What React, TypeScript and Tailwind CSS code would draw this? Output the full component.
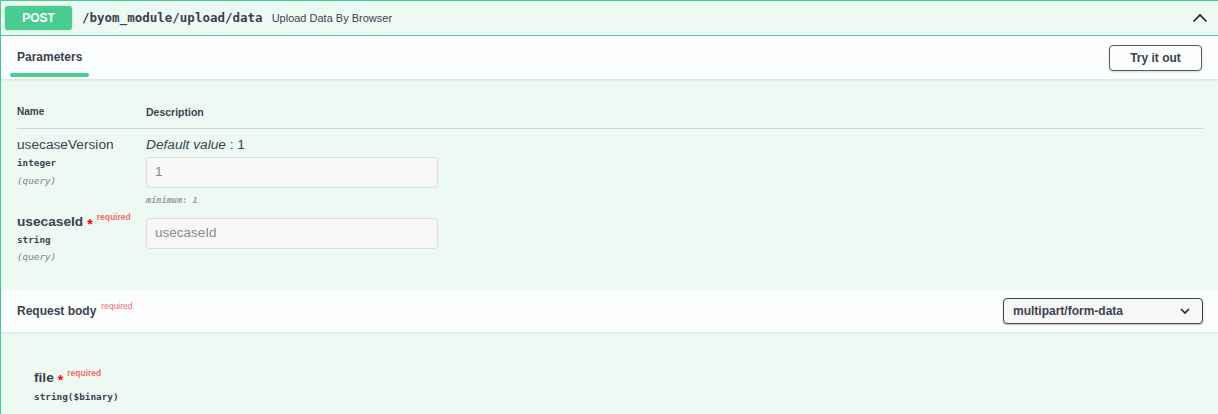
import React from "react";

const sans = "font-['Liberation_Sans',Arial,sans-serif]";
const mono = "font-['DejaVu_Sans_Mono',monospace]";

function Req() {
  return (
    <>
      <span className="ml-[4px] text-[14px] leading-none text-[red] relative top-[2px]">*</span>
      <span className="ml-[4px] text-[8.5px] leading-none text-[#f86a6a] relative -top-[5px]">required</span>
    </>
  );
}

export default function App() {
  return (
    <div className={`w-[1218px] h-[414px] overflow-hidden bg-white ${sans} text-[#3b4151]`}>
      <div className="w-[1230px] h-[414px] border-l border-t border-[#49cc90] bg-[#edfaf4]">
        {/* Summary */}
        <div className="flex items-center h-[35px] pl-[4px] border-b border-[#49cc90] w-[1217px]">
          <div className="w-[67px] h-[24px] rounded-[3px] bg-[#49cc90] text-white font-bold text-[12px] flex items-center justify-center shadow-[0_0_3px_rgba(0,0,0,0.19)]">
            POST
          </div>
          <span className={`ml-[10px] ${mono} font-bold text-[12.5px] text-[#3b4151]`}>
            /byom_module/upload/data
          </span>
          <span className="ml-[9px] text-[11px] text-[#3b4151]">Upload Data By Browser</span>
          <svg className="ml-auto mr-[10px]" width="16" height="10" viewBox="0 0 16 10">
            <polyline points="1.5,8.5 8,2 14.5,8.5" fill="none" stroke="#222" strokeWidth="1.6" />
          </svg>
        </div>

        {/* Tab header */}
        <div className="w-[1217px] h-[43px] bg-white/80 shadow-[0_1px_2px_rgba(0,0,0,0.1)] flex items-center pl-[9px] pr-[16px] relative">
          <div className="relative h-[43px] px-[7px] flex items-center">
            <span className="text-[12px] font-bold text-[#3b4151] relative -top-[1px]">Parameters</span>
            <div className="absolute left-0 right-0 top-[37px] h-[4px] rounded-[2px] bg-[#49cc90]" />
          </div>
          <button className="ml-auto w-[93px] h-[26px] rounded-[4px] border-[1.5px] border-[#55585f] bg-transparent text-[12px] font-bold text-[#3b4151] flex items-center justify-center shadow-[0_1px_2px_rgba(0,0,0,0.15)]">
            Try it out
          </button>
        </div>

        {/* Parameters table */}
        <div className="pl-[16px] w-[1202px]">
          <div className="pt-[26px] pb-[9px] flex border-b border-[#cbd5d4]">
            <div className="w-[129px] h-[14px] leading-[14px] text-[10px] font-bold">Name</div>
            <div className="h-[14px] leading-[14px] text-[10.5px] font-bold">Description</div>
          </div>

          {/* Row 1 */}
          <div className="flex pt-[8px]">
            <div className="w-[129px] flex flex-col">
              <div className="h-[16px] leading-[16px] text-[13.7px]">usecaseVersion</div>
              <div className={`mt-[4px] h-[12px] leading-[12px] ${mono} font-bold text-[9.3px]`}>integer</div>
              <div className={`mt-[6px] h-[12px] leading-[12px] ${mono} italic text-[9.3px] text-[#808080]`}>(query)</div>
            </div>
            <div className="flex flex-col">
              <div className="h-[16px] leading-[16px] text-[13.7px]">
                <i>Default value</i> : 1
              </div>
              <div className="mt-[4px] w-[292px] h-[31px] rounded-[4px] border border-[#dcdfde] bg-[#f8f8f8] flex items-center pl-[8px] text-[13.5px] text-[#8a8a8a]">
                1
              </div>
              <div className={`mt-[6px] h-[12px] leading-[12px] ${mono} italic font-bold text-[8.6px] text-[#9a9a9a]`}>minimum: 1</div>
            </div>
          </div>

          {/* Row 2 */}
          <div className="flex pt-[8px] pb-[27px]">
            <div className="w-[129px] flex flex-col">
              <div className="h-[16px] leading-[16px] text-[13.7px] font-bold flex items-center whitespace-nowrap">
                usecaseId
                <Req />
              </div>
              <div className={`mt-[4px] h-[12px] leading-[12px] ${mono} font-bold text-[9.3px]`}>string</div>
              <div className={`mt-[5px] h-[12px] leading-[12px] ${mono} italic text-[9.3px] text-[#808080]`}>(query)</div>
            </div>
            <div className="flex flex-col">
              <div className="mt-[4px] w-[292px] h-[31px] rounded-[4px] border border-[#dcdfde] bg-[#f8f8f8] flex items-center pl-[8px] text-[13.5px] text-[#8a8a8a]">
                usecaseId
              </div>
            </div>
          </div>
        </div>

        {/* Request body header */}
        <div className="w-[1217px] h-[42px] bg-white/80 shadow-[0_1px_2px_rgba(0,0,0,0.1)] flex items-center pl-[16px] pr-[15px]">
          <div className="flex items-center whitespace-nowrap">
            <span className="text-[12px] font-bold">Request body</span>
            <span className="ml-[5px] text-[8.5px] text-[#f86a6a] relative -top-[5px]">required</span>
          </div>
          <div className="ml-auto w-[200px] h-[26px] rounded-[4px] border-[1.5px] border-[#41444e] bg-[#f7f7f7] flex items-center pl-[9px] pr-[12px] shadow-[0_1px_2px_rgba(0,0,0,0.25)]">
            <span className="text-[12px] font-bold">multipart/form-data</span>
            <svg className="ml-auto" width="10" height="6" viewBox="0 0 10 6">
              <polyline points="1,1 5,5 9,1" fill="none" stroke="#222" strokeWidth="1.6" />
            </svg>
          </div>
        </div>

        {/* Body */}
        <div className="pl-[33px] pt-[38px]">
          <div className="h-[16px] leading-[16px] text-[13.7px] font-bold flex items-center whitespace-nowrap">
            file
            <Req />
          </div>
          <div className={`mt-[5px] h-[12px] leading-[12px] ${mono} font-bold text-[9.4px]`}>string($binary)</div>
        </div>
      </div>
    </div>
  );
}
